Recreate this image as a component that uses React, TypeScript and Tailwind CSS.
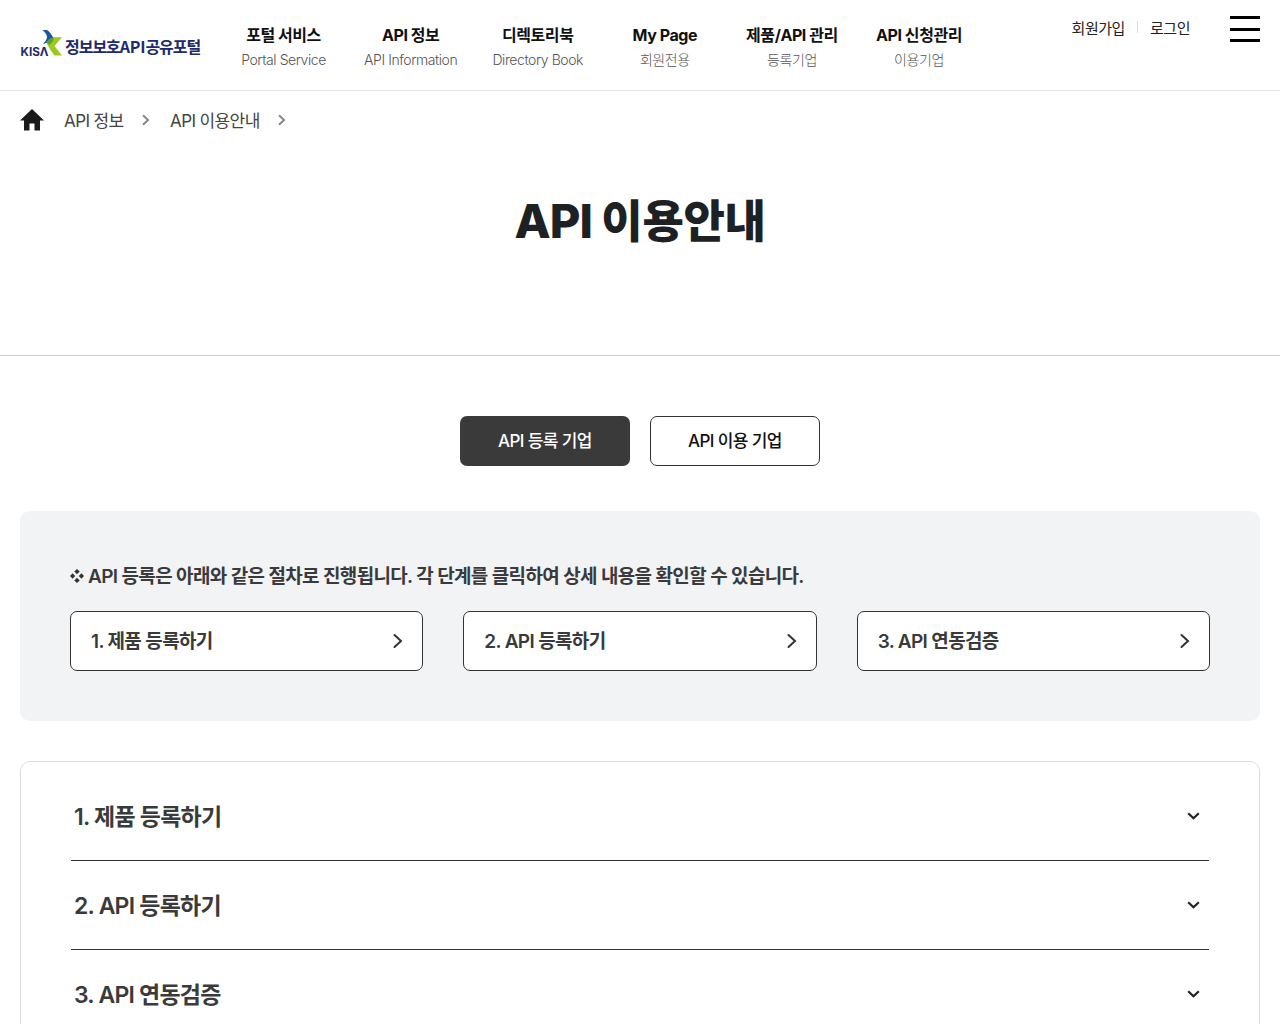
const menus = [
  { title: "포털 서비스", sub: "Portal Service" },
  { title: "API 정보", sub: "API Information" },
  { title: "디렉토리북", sub: "Directory Book" },
  { title: "My Page", sub: "회원전용" },
  { title: "제품/API 관리", sub: "등록기업" },
  { title: "API 신청관리", sub: "이용기업" },
];

const steps = ["1. 제품 등록하기", "2. API 등록하기", "3. API 연동검증"];

function Logo() {
  return (
    <div className="flex items-center text-[#1d2a6b]">
      <svg width="45" height="30" viewBox="0 0 45 30" aria-label="KISA" className="shrink-0">
        <path d="M22.500 1h4.500q2.500 1 6.500 8-3 4.500-10.500 6 4-4 4-7.500-.500-3-4.500-6.500z" fill="#1757a6" />
        <path d="M42 8.300h-8.500q-4 1.500-6.500 6.700 3 6 7.500 11.500h7.500l-7.500-9.500z" fill="#9aca1c" />
        <path d="M33.500 8.300q-4.500 1-7.500 5l3.500 2.500 3.500-3.500z" fill="#5f9e38" />
        <text x="0.500" y="26.500" fontSize="11.500" fontWeight="700" fill="#1d2a6b" textLength="28" lengthAdjust="spacingAndGlyphs">
          KISΛ
        </text>
      </svg>
      <span className="pt-[3px] font-['Noto_Sans_CJK_KR',sans-serif] text-[16px] leading-6 font-bold tracking-[-1.020px] whitespace-nowrap">
        정보보호<span className="tracking-[-0.200px]">API</span>공유포털
      </span>
    </div>
  );
}

function Header() {
  return (
    <header className="flex h-[91px] items-start border-b border-[#e5e5e5] pl-5 pr-5">
      <div className="mt-[29px] w-[200px] shrink-0">
        <Logo />
      </div>
      <nav className="mt-[23px] flex">
        {menus.map((m) => (
          <a key={m.title} className="flex w-[127.100px] flex-col items-center whitespace-nowrap">
            <span className="text-[16px] leading-6 font-bold tracking-[-0.450px] text-[#111]">{m.title}</span>
            <span className="text-[14px] leading-[26px] font-light tracking-[-0.420px] text-[#555]">{m.sub}</span>
          </a>
        ))}
      </nav>
      <div className="mt-[17px] ml-auto flex items-center text-[15px] leading-[22px] tracking-[-0.450px] text-[#222]">
        <a className="pt-px">회원가입</a>
        <span className="mx-3 mb-1 h-3 w-px bg-[#ddd]" />
        <a className="pt-px">로그인</a>
      </div>
      <button className="mt-4 ml-10 flex h-[26px] w-[30px] flex-col justify-between">
        <span className="h-[3px] w-full bg-black" />
        <span className="h-[3px] w-full bg-black" />
        <span className="h-[3px] w-full bg-black" />
      </button>
    </header>
  );
}

function CrumbArrow() {
  return (
    <svg width="8" height="12" viewBox="0 0 8 12" fill="none" stroke="#888" strokeWidth="2">
      <path d="M1 1.300 6 6 1 10.700" />
    </svg>
  );
}

function Breadcrumb() {
  return (
    <div className="flex h-[58px] items-center pl-5 text-[17px] tracking-[-0.600px] text-[#444]">
      <svg width="24" height="22" viewBox="0 0 24 22" fill="#1a1a1a" className="mr-5">
        <path d="M12 0 24 11.500h-4V21.500h-5.500V14.500h-5V21.500H4V11.500H0z" />
      </svg>
      <span className="w-[77.500px] pt-[3px]">API 정보</span>
      <span className="w-[28.500px]">
        <CrumbArrow />
      </span>
      <span className="w-[108px] pt-[3px]">API 이용안내</span>
      <CrumbArrow />
    </div>
  );
}

function StepCard({ label }: { label: string }) {
  return (
    <a className="flex h-[60px] flex-1 items-center justify-between rounded-[7px] border border-[#333] bg-white pr-[18px] pl-5 text-[19px] font-semibold tracking-[-0.650px] text-[#3a3a3a]">
      <span className="pt-[2px]">{label}</span>
      <svg width="12" height="16" viewBox="0 0 12 16" fill="none" stroke="#333" strokeWidth="2" strokeLinecap="round">
        <path d="M2.500 2 9 8l-6.500 6" />
      </svg>
    </a>
  );
}

function AccordionRow({ label }: { label: string }) {
  return (
    <div className="flex h-[89px] items-center justify-between border-b border-[#333] pr-[9px] pl-[3px]">
      <span className="pt-[2px] text-[23px] font-semibold tracking-[-0.780px] text-[#3a3a3a]">{label}</span>
      <svg width="13" height="9" viewBox="0 0 13 9" fill="none" stroke="#222" strokeWidth="2.200">
        <path d="M1.200 1.200 6.500 6.300 11.800 1.200" />
      </svg>
    </div>
  );
}

export default function App() {
  return (
    <div className="h-[1024px] overflow-hidden bg-white font-['Inter','Noto_Sans_CJK_KR',sans-serif]">
      <Header />
      <section className="h-[265px] border-b border-[#ccc]">
        <Breadcrumb />
        <h1 className="mt-[37px] text-center text-[47px] leading-[70px] font-extrabold tracking-[-0.900px] text-[#1e2124]">
          API <span className="text-[45px] tracking-[-0.350px]">이용안내</span>
        </h1>
      </section>

      <main className="px-5 pt-[60px]">
        <div className="flex justify-center gap-5 text-[17px] font-medium tracking-[-0.600px]">
          <button className="h-[50px] w-[170px] rounded-[7px] bg-[#3a3a3a] pt-[2px] text-white">API 등록 기업</button>
          <button className="h-[50px] w-[170px] rounded-[7px] border border-[#333] bg-white pt-[2px] text-[#111]">
            API 이용 기업
          </button>
        </div>

        <section className="mt-[45px] h-[210px] rounded-[10px] bg-[#f1f3f5] px-[50px] pt-[50px]">
          <p className="flex h-[30px] items-center text-[19px] font-semibold tracking-[-0.660px] whitespace-nowrap text-[#3a3a3a]">
            <svg width="14" height="14" viewBox="0 0 14 14" fill="#333" className="mr-1 mb-px shrink-0">
              <path d="M7 0 9.700 2.600 7 5.200 4.300 2.600zM7 8.800 9.700 11.400 7 14 4.300 11.400zM2.600 4.300 5.200 7 2.600 9.700 0 7zM11.400 4.300 14 7 11.400 9.700 8.800 7z" />
            </svg>
            <span className="pt-[2px]">API 등록은 아래와 같은 절차로 진행됩니다. 각 단계를 클릭하여 상세 내용을 확인할 수 있습니다.</span>
          </p>
          <div className="mt-5 flex gap-10">
            {steps.map((s) => (
              <StepCard key={s} label={s} />
            ))}
          </div>
        </section>

        <section className="mt-10 h-[400px] rounded-[10px] border border-[#dcdcdc] px-[50px] pt-[10px]">
          {steps.map((s) => (
            <AccordionRow key={s} label={s} />
          ))}
        </section>
      </main>
    </div>
  );
}
